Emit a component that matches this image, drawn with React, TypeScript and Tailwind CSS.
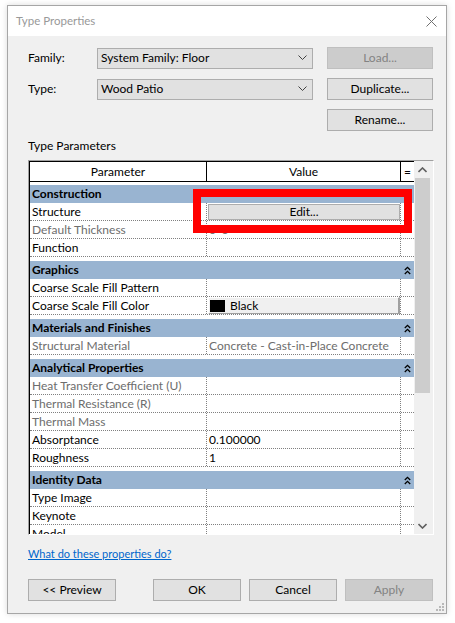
import React from 'react'

type Row = { p: string; v?: string; kind?: 'edit' | 'color'; gray?: boolean }
type Group = { name: string; rows: Row[] }

const groups: Group[] = [
  {
    name: 'Construction',
    rows: [
      { p: 'Structure', kind: 'edit' },
      { p: 'Default Thickness', v: `0' 6"`, gray: true },
      { p: 'Function' },
    ],
  },
  {
    name: 'Graphics',
    rows: [{ p: 'Coarse Scale Fill Pattern' }, { p: 'Coarse Scale Fill Color', kind: 'color' }],
  },
  {
    name: 'Materials and Finishes',
    rows: [{ p: 'Structural Material', v: 'Concrete - Cast-in-Place Concrete', gray: true }],
  },
  {
    name: 'Analytical Properties',
    rows: [
      { p: 'Heat Transfer Coefficient (U)', gray: true },
      { p: 'Thermal Resistance (R)', gray: true },
      { p: 'Thermal Mass', gray: true },
      { p: 'Absorptance', v: '0.100000' },
      { p: 'Roughness', v: '1' },
    ],
  },
  {
    name: 'Identity Data',
    rows: [{ p: 'Type Image' }, { p: 'Keynote' }, { p: 'Model' }],
  },
]

function ChevronDown({ className = '' }: { className?: string }) {
  return (
    <svg width="9" height="6" viewBox="0 0 9 6" className={className}>
      <polyline points="0.5,0.5 4.5,4.5 8.5,0.5" fill="none" stroke="#404040" strokeWidth="1" />
    </svg>
  )
}

function DoubleUp() {
  return (
    <svg width="7" height="9" viewBox="0 0 7 9">
      <polyline points="0.8,4 3.5,1.3 6.2,4" fill="none" stroke="#000" strokeWidth="1.3" />
      <polyline points="0.8,8 3.5,5.3 6.2,8" fill="none" stroke="#000" strokeWidth="1.3" />
    </svg>
  )
}

function Button({ label, disabled, className = '' }: { label: string; disabled?: boolean; className?: string }) {
  return (
    <div
      className={`flex h-[22px] items-center justify-center border ${
        disabled ? 'border-[#bfbfbf] bg-[#cccccc] text-[#838383]' : 'border-[#adadad] bg-[#e1e1e1] text-black'
      } ${className}`}
    >
      {label}
    </div>
  )
}

function Combo({ value }: { value: string }) {
  return (
    <div className="flex h-[21px] w-[216px] items-center justify-between border border-[#adadad] bg-[#e1e1e1] pl-[3px] pr-[5px]">
      <span>{value}</span>
      <ChevronDown />
    </div>
  )
}

function DataRow({ row }: { row: Row }) {
  const tc = row.gray ? 'text-[#6d6d6d]' : 'text-black'
  return (
    <div className="flex h-[18px] border-b border-dotted border-[#808080]">
      <div className={`w-[177px] shrink-0 truncate border-r border-dotted border-[#808080] pl-[2px] leading-[17px] ${tc}`}>
        {row.p}
      </div>
      <div className={`w-[194px] shrink-0 overflow-hidden whitespace-nowrap border-r border-dotted border-[#808080] ${tc}`}>
        {row.kind === 'edit' && (
          <div className="ml-[1px] mt-[1px] flex h-[16px] w-[192px] items-center justify-center border border-[#adadad] bg-[#e1e1e1] text-black">
            Edit...
          </div>
        )}
        {row.kind === 'color' && (
          <div className="ml-[1px] flex h-[18px] w-[192px] items-center border border-t-white border-l-white border-r-2 border-b-2 border-r-[#a0a0a0] border-b-[#a0a0a0] bg-[#f0f0f0] text-black">
            <span className="ml-[1px] inline-block h-[12px] w-[15px] bg-black" />
            <span className="ml-[5px]">Black</span>
          </div>
        )}
        {!row.kind && <span className="pl-[2px] leading-[17px]">{row.v}</span>}
      </div>
      <div className="flex-1" />
    </div>
  )
}

export default function App() {
  return (
    <div className="h-[623px] w-[455px] bg-white pl-[7px] pt-[5px] text-[12px] text-black font-['Lato','Noto_Sans',sans-serif]">
      <div className="flex h-[609px] w-[440px] flex-col border border-[#a6a6a6] bg-[#f0f0f0] shadow-[0_0_6px_rgba(0,0,0,0.15)]">
        {/* Title bar */}
        <div className="flex h-[30px] shrink-0 items-center justify-between bg-white pl-[8px] pr-[9px]">
          <span className="text-[11.5px] text-[#999999]">Type Properties</span>
          <svg width="11" height="11" viewBox="0 0 11 11">
            <line x1="0.5" y1="0.5" x2="10.5" y2="10.5" stroke="#707070" strokeWidth="1" />
            <line x1="10.5" y1="0.5" x2="0.5" y2="10.5" stroke="#707070" strokeWidth="1" />
          </svg>
        </div>

        <div className="relative flex flex-1 flex-col pl-[20px] pr-[12px]">
          {/* Family / Type */}
          <div className="mt-[11px] flex h-[22px] items-center">
            <span className="w-[69px]">Family:</span>
            <Combo value="System Family: Floor" />
            <Button label="Load..." disabled className="ml-[14px] w-[106px]" />
          </div>
          <div className="mt-[9px] flex h-[22px] items-center">
            <span className="w-[69px]">Type:</span>
            <Combo value="Wood Patio" />
            <Button label="Duplicate..." className="ml-[14px] w-[106px]" />
          </div>
          <div className="mt-[9px] flex h-[22px] justify-end">
            <Button label="Rename..." className="mr-[1px] w-[106px]" />
          </div>

          <div className="mt-[7px] h-[16px] leading-[16px]">Type Parameters</div>

          {/* Parameter table */}
          <div className="relative mt-[6px] flex h-[375px] w-[406px] border border-t-[#a0a0a0] border-l-[#a0a0a0] border-r-white border-b-white">
            <div className="h-full w-[385px] overflow-hidden border-l border-t border-black bg-white">
              <div className="flex h-[20px] border-b border-black">
                <div className="w-[177px] border-r border-black text-center leading-[19px]">Parameter</div>
                <div className="w-[194px] border-r border-black text-center leading-[19px]">Value</div>
                <div className="flex-1 text-center leading-[19px]">=</div>
              </div>
              {groups.map((g, i) => (
                <div key={g.name} className={i === 0 ? 'pt-[3px]' : 'pt-[4px]'}>
                  <div className="flex h-[18px] items-center justify-between bg-[#99b4d1] pl-[2px] pr-[3px] font-bold">
                    <span>{g.name}</span>
                    <DoubleUp />
                  </div>
                  {g.rows.map((r) => (
                    <DataRow key={r.p} row={r} />
                  ))}
                </div>
              ))}
            </div>
            {/* Scrollbar */}
            <div className="flex h-full w-[17px] flex-col bg-[#f0f0f0]">
              <div className="flex h-[17px] items-center justify-center">
                <svg width="9" height="6" viewBox="0 0 9 6">
                  <polyline points="0.5,5 4.5,1 8.5,5" fill="none" stroke="#606060" strokeWidth="1.6" />
                </svg>
              </div>
              <div className="mx-[1px] h-[215px] bg-[#cdcdcd]" />
              <div className="flex-1" />
              <div className="flex h-[17px] items-center justify-center">
                <svg width="9" height="6" viewBox="0 0 9 6">
                  <polyline points="0.5,1 4.5,5 8.5,1" fill="none" stroke="#606060" strokeWidth="1.6" />
                </svg>
              </div>
            </div>
            {/* annotation */}
            <div className="absolute left-[164px] top-[28px] h-[44px] w-[219px] border-[8px] border-[#ff0000]" />
          </div>

          <div className="mt-[11px] h-[16px] leading-[16px]">
            <span className="text-[11px] text-[#0066cc] underline">What do these properties do?</span>
          </div>

          <div className="mt-[17px] flex">
            <Button label="<< Preview" className="w-[88px]" />
            <Button label="OK" className="ml-[37px] w-[88px]" />
            <Button label="Cancel" className="ml-[8px] w-[88px]" />
            <Button label="Apply" disabled className="ml-[8px] w-[88px]" />
          </div>

          {/* resize grip */}
          <svg width="8" height="8" viewBox="0 0 8 8" className="absolute bottom-[2px] right-[2px]">
            {[
              [6, 0],
              [6, 3],
              [3, 3],
              [6, 6],
              [3, 6],
              [0, 6],
            ].map(([x, y]) => (
              <rect key={`${x}-${y}`} x={x} y={y} width="2" height="2" fill="#b8b8b8" />
            ))}
          </svg>
        </div>
      </div>
    </div>
  )
}
